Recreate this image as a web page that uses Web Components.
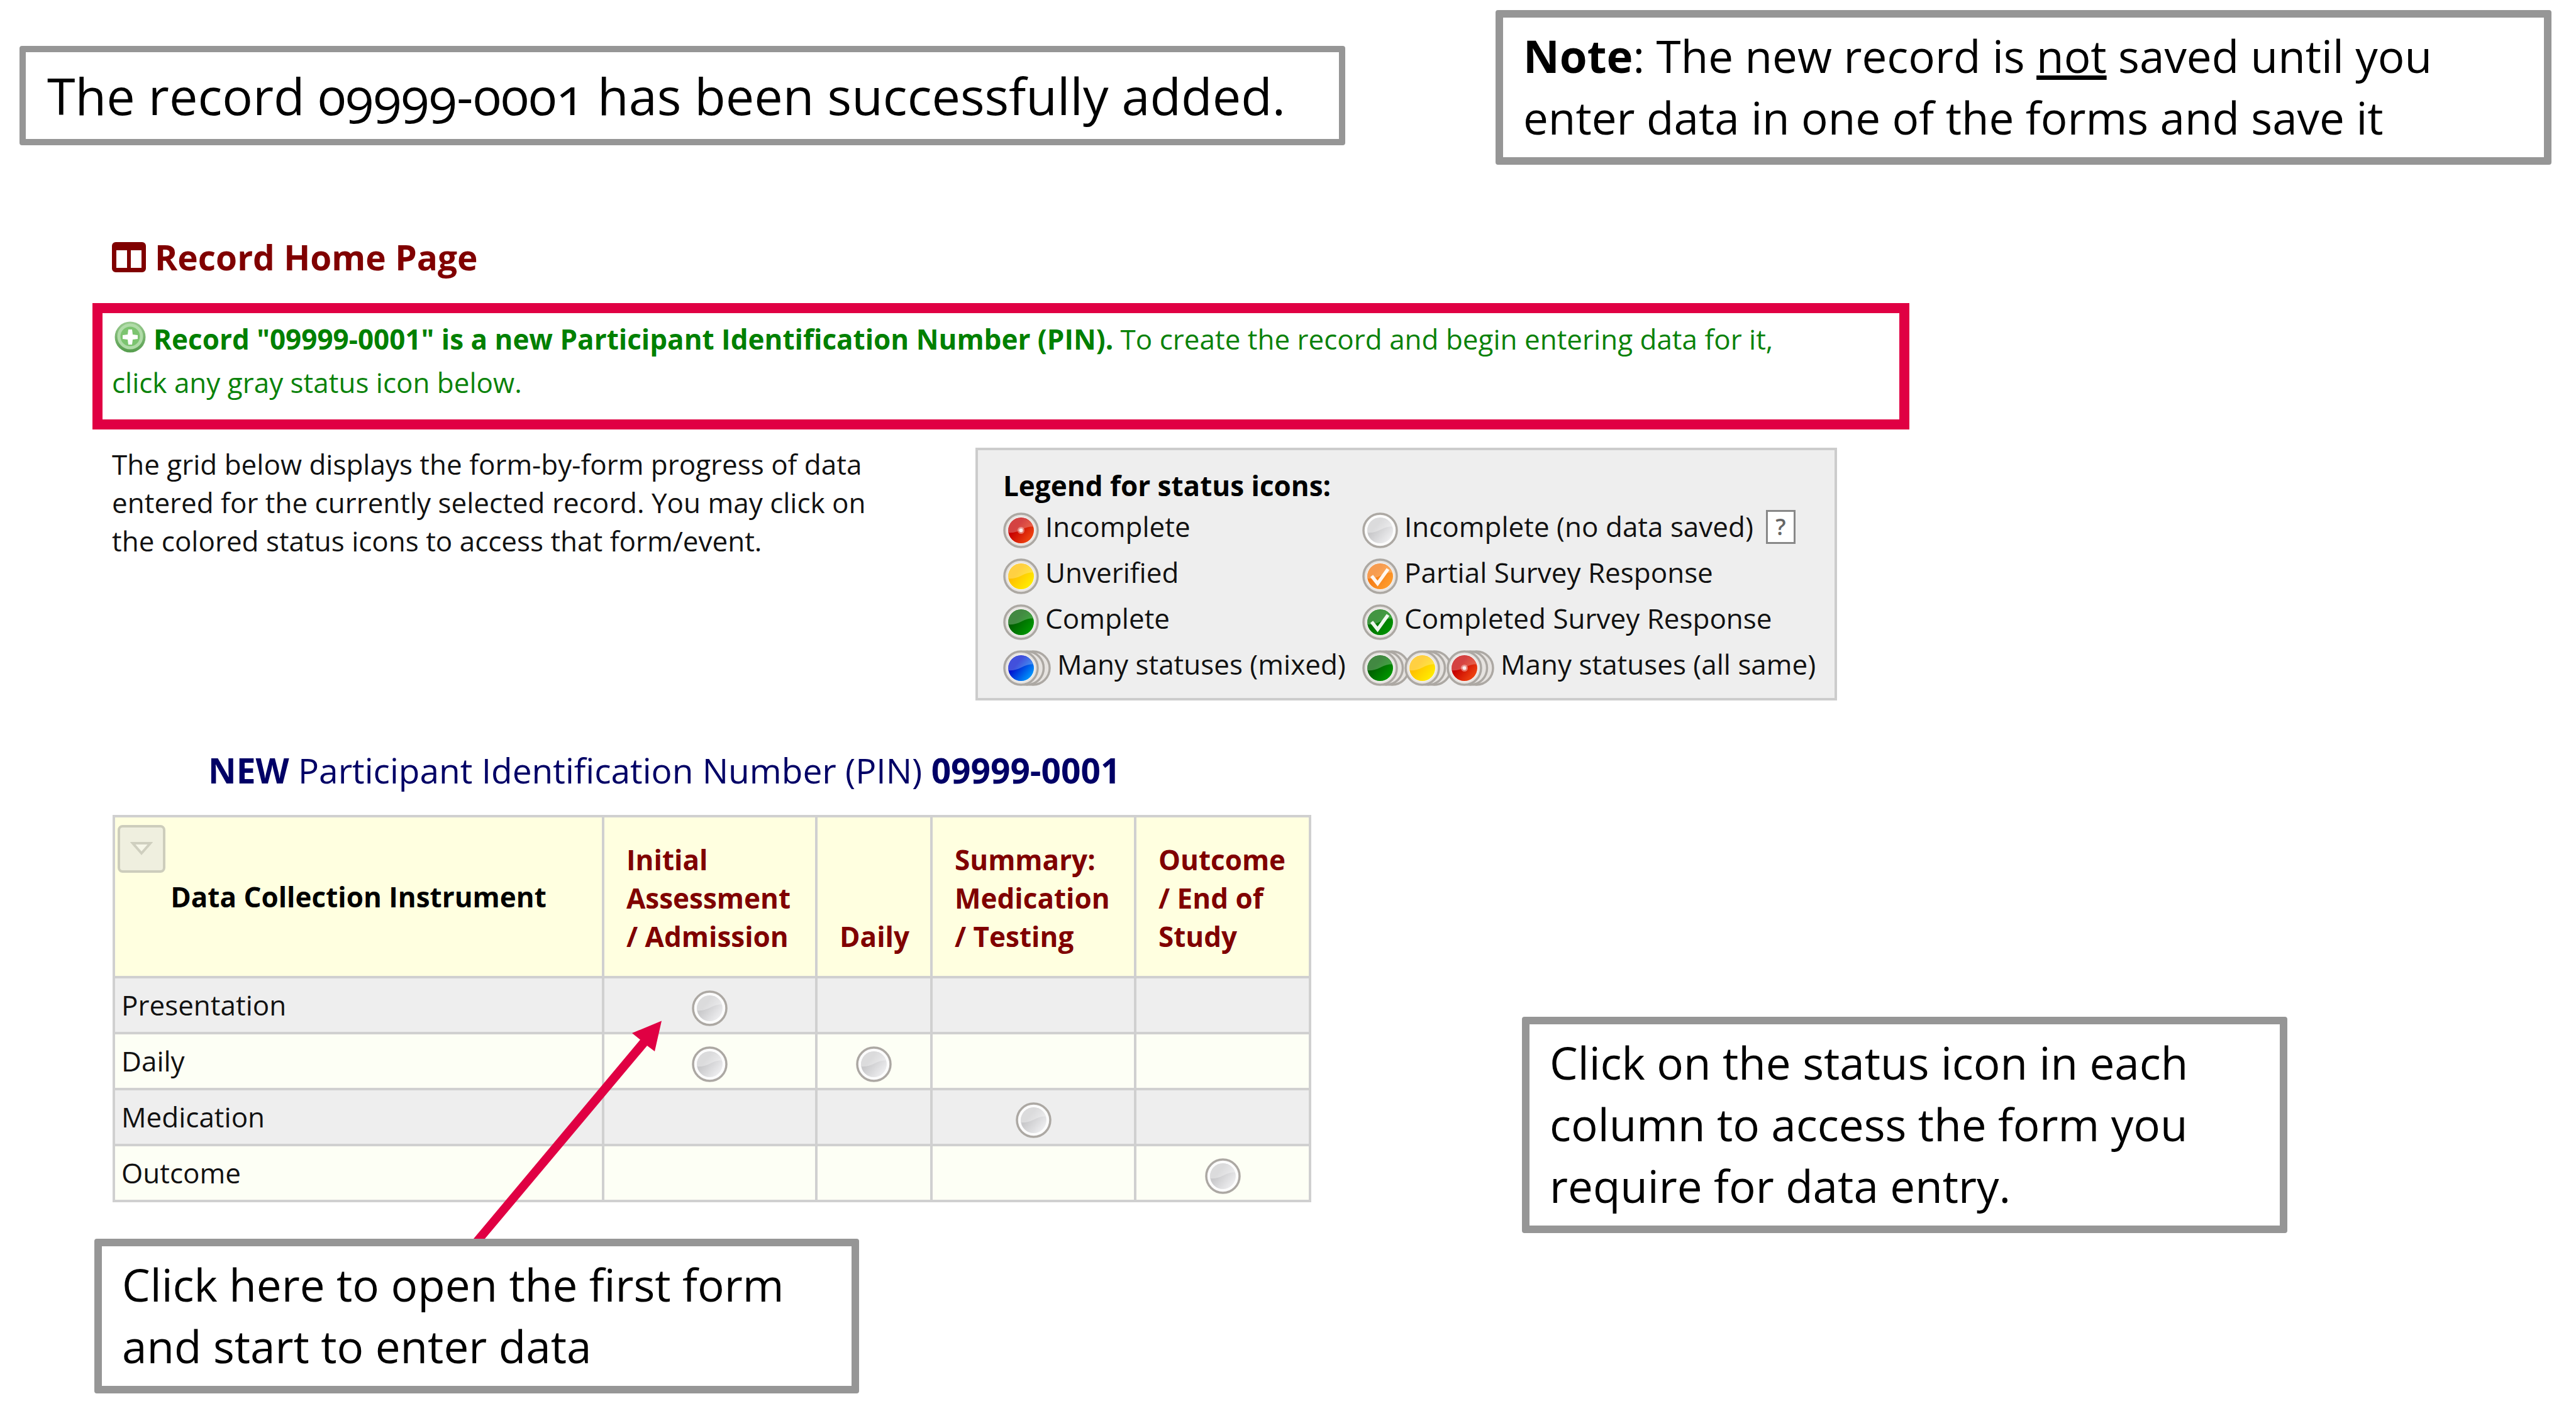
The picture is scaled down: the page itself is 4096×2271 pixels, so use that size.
<!DOCTYPE html>
<html lang="en">
<head>
<meta charset="utf-8">
<title>Record Home Page</title>
<style>
  body { margin: 0; background: #fff; font-family: "Open Sans", "Noto Sans", sans-serif; font-size: 44px; line-height: 61px; color: #111; }
</style>
</head>
<body>
<guide-page>
  <call-out slot="banner" class="large">The record 09999-0001 has been successfully added.</call-out>
  <call-out slot="note"><b>Note</b>: The new record is <u>not</u> saved until you<br>enter data in one of the forms and save it</call-out>
  <page-title slot="main">Record Home Page</page-title>
  <record-alert slot="main"><b>Record "09999-0001" is a new Participant Identification Number (PIN).</b> To create the record and begin entering data for it,<br>click any gray status icon below.</record-alert>
  <intro-row slot="main">
    <span>The grid below displays the form-by-form progress of data entered for the currently selected record. You may click on the colored status icons to access that form/event.</span>
    <status-legend slot="legend"></status-legend>
  </intro-row>
  <record-heading slot="grid"><b>NEW</b> Participant Identification Number (PIN) <b>09999-0001</b></record-heading>
  <event-grid slot="grid"></event-grid>
  <call-out slot="start">Click here to open the first form and start to enter data</call-out>
  <call-out slot="side">Click on the status icon in each column to access the form you require for data entry.</call-out>
</guide-page>

<script>
const define = (name, html) => {
  const t = document.createElement('template');
  t.innerHTML = html;
  customElements.define(name, class extends HTMLElement {
    constructor() {
      super();
      this.attachShadow({ mode: 'open' }).append(t.content.cloneNode(true));
    }
  });
};

// Round status lamp; attributes: kind, and stack for a pile of lamps.
const BALLS = {
  red:    ['#c60000', '#f24a12'],
  yellow: ['#ffc000', '#fff000'],
  green:  ['#006000', '#009a00'],
  blue:   ['#0014d0', '#00a0ff'],
  orange: ['#f57a14', '#ffa030'],
  tick:   ['#007000', '#009400'],
  gray:   ['#c8c8ca', '#f0f0f2']
};
customElements.define('status-dot', class extends HTMLElement {
  constructor() { super(); this.attachShadow({ mode: 'open' }); }
  connectedCallback() {
    const kind = this.getAttribute('kind') || 'gray';
    const stack = this.hasAttribute('stack');
    const [dark, bright] = BALLS[kind];
    const gray = kind === 'gray';
    const w = stack ? 76 : 57;
    const ring = x => `<circle cx="${x}" cy="28.5" r="26.5" fill="${gray ? '#fbfbfb' : '#e6e3e0'}" stroke="#aca8a3" stroke-width="3.5"/>`;
    const check = kind === 'orange' || kind === 'tick'
      ? '<path d="M15 28l9.500 12L41 17" fill="none" stroke="#fff" stroke-width="5.500" opacity=".93"/>' : '';
    const spot = kind === 'red' ? '<circle cx="28.5" cy="28.5" r="5.500" fill="#fff" opacity=".4"/><circle cx="28.5" cy="28.5" r="3" fill="#fff" opacity=".85"/>' : '';
    this.shadowRoot.innerHTML = `
      <style>
        :host { display: inline-block; flex: none; line-height: 0; }
        svg { display: block; }
      </style>
      <svg width="${w}" height="57" viewBox="0 0 ${w} 57" aria-hidden="true">
        <defs><linearGradient id="g" x1=".25" y1=".45" x2=".85" y2=".95">
          <stop offset="0" stop-color="${dark}"/><stop offset="1" stop-color="${bright}"/>
        </linearGradient></defs>
        ${stack ? ring(47.5) + ring(38) : ''}${ring(28.5)}
        <circle cx="28.5" cy="28.5" r="22" fill="#fff" opacity=".5"/>
        <circle cx="28.5" cy="28.5" r="20.5" fill="url(#g)"/>
        <path d="M8 28.5a20.500 20.500 0 0 1 40-6C40 22 34 25 28 28S14 33 8.500 32z" fill="#fff" opacity="${gray ? .35 : .26}"/>
        ${spot}${check}
      </svg>`;
  }
});

define('call-out', `
  <style>
    :host { display: block; box-sizing: border-box; border: 12px solid #969696; border-radius: 4px; background: #fff;
      padding: 12px 32px 14px; font-size: 71px; line-height: 98px; color: #000; }
    :host(.large) { font-size: 81px; border-width: 10px; padding: 20px 34px; font-variant-numeric: oldstyle-nums; }
  </style><slot></slot>`);

define('page-title', `
  <style>
    :host { display: block; padding-left: 31px; }
    h1 { margin: 0; display: flex; align-items: center; gap: 14px; font-size: 55px; line-height: 76px; color: #800000; }
  </style>
  <h1><svg width="54" height="48" viewBox="0 0 54 48" aria-hidden="true">
    <path fill="#800000" fill-rule="evenodd" d="M6 0h42a6 6 0 0 1 6 6v36a6 6 0 0 1-6 6H6a6 6 0 0 1-6-6V6a6 6 0 0 1 6-6zM7 13v28h17V13zM30 13v28h17V13z"/>
  </svg><slot></slot></h1>`);

define('record-alert', `
  <style>
    :host { display: block; box-sizing: border-box; max-width: 2889px; margin-top: 35px; border: 16px solid #e00043;
      padding: 7px 15px 24px 15px; line-height: 69px; color: #0a820a; }
    svg { vertical-align: -6px; margin-right: 10px; }
    ::slotted(b) { color: #008000; }
  </style>
  <svg width="56" height="52" viewBox="0 0 56 52" aria-hidden="true">
    <defs><linearGradient id="p" x1="0" y1="0" x2="0" y2="1"><stop offset="0" stop-color="#9acb90"/><stop offset="1" stop-color="#559d4d"/></linearGradient></defs>
    <circle cx="29" cy="26" r="24.500" fill="url(#p)"/>
    <circle cx="29" cy="25" r="18" fill="#7cc470" stroke="#b0dca8" stroke-width="5"/>
    <path d="M26 14h6l1 8 8 1v6l-8 1-1 8h-6l-1-8-8-1v-6l8-1z" fill="#fff"/>
  </svg><slot></slot>`);

define('intro-row', `
  <style>
    :host { display: flex; align-items: flex-start; gap: 133px; padding: 29px 0 0 31px; }
    p { margin: -4px 0 0; width: 1240px; }
  </style>
  <p><slot></slot></p><slot name="legend"></slot>`);

define('status-legend', `
  <style>
    :host { display: block; box-sizing: border-box; width: 1370px; border: 4px solid #ccc; background: #eee; padding: 28px 0 17px 40px; }
    h2 { margin: 0; font-size: 44px; line-height: 57px; color: #000; }
    ul { margin: 0; padding: 0; list-style: none; display: grid; grid-template-columns: 571px 1fr; }
    li { display: flex; align-items: center; gap: 10px; line-height: 73px; height: 73px; white-space: nowrap; }
    status-dot { padding-top: 11px; }
    status-dot + status-dot { margin-left: -19px; }
    button { width: 47px; height: 54px; margin-left: 10px; padding: 0; border: 3px solid #888; background: #fff;
      font: 600 36px/46px "Open Sans", sans-serif; color: #666; }
  </style>
  <h2>Legend for status icons:</h2>
  <ul>
    <li><status-dot kind="red"></status-dot>Incomplete</li>
    <li><status-dot kind="gray"></status-dot>Incomplete (no data saved)<button type="button">?</button></li>
    <li><status-dot kind="yellow"></status-dot>Unverified</li>
    <li><status-dot kind="orange"></status-dot>Partial Survey Response</li>
    <li><status-dot kind="green"></status-dot>Complete</li>
    <li><status-dot kind="tick"></status-dot>Completed Survey Response</li>
    <li><status-dot kind="blue" stack></status-dot>Many statuses (mixed)</li>
    <li><status-dot kind="green" stack></status-dot><status-dot kind="yellow" stack></status-dot><status-dot kind="red" stack></status-dot>Many statuses (all same)</li>
  </ul>`);

define('record-heading', `
  <style>
    :host { display: block; padding: 74px 0 34px 184px; }
    h2 { margin: 0; font-size: 55px; font-weight: 400; line-height: 74px; color: #000066; white-space: nowrap; }
  </style><h2><slot></slot></h2>`);

const dot = '<a href="#"><status-dot kind="gray"></status-dot></a>';
define('event-grid', `
  <style>
    :host { display: block; padding-left: 32px; }
    table { width: 1906px; table-layout: fixed; border-collapse: collapse; }
    th, td { box-sizing: border-box; border: 4px solid #d0d0d0; }
    thead th { position: relative; height: 256px; background: #ffffe0; color: #800000; text-align: left; vertical-align: bottom; padding: 0 20px 32px 35px; }
    thead th.name { color: #000; text-align: center; vertical-align: middle; padding: 0; }
    tbody th { font-weight: 400; text-align: left; padding: 0 10px; }
    tbody td { padding: 0; text-align: center; }
    tbody tr { height: 89px; background: #fdfff5; }
    tbody tr:nth-child(odd) { background: #eee; }
    a { display: inline-block; vertical-align: middle; line-height: 0; padding-top: 8px; }
    button { position: absolute; left: 4px; top: 12px; width: 76px; height: 76px; padding: 0; border: 4px solid #cdcdbc;
      border-radius: 8px; background: #efefdf; display: grid; place-items: center; }
  </style>
  <table>
    <colgroup><col style="width:778px"><col style="width:339px"><col style="width:183px"><col style="width:324px"><col></colgroup>
    <thead><tr>
      <th class="name" scope="col"><button type="button"><svg width="36" height="22" viewBox="0 0 36 22" aria-hidden="true"><path d="M4 2h28L18 18z" fill="#f6f6e8" stroke="#cfcfbf" stroke-width="4"/></svg></button>Data Collection Instrument</th>
      <th scope="col">Initial Assessment / Admission</th><th scope="col">Daily</th><th scope="col">Summary: Medication / Testing</th><th scope="col">Outcome / End of Study</th>
    </tr></thead>
    <tbody>
      <tr><th scope="row">Presentation</th><td>${dot}</td><td></td><td></td><td></td></tr>
      <tr><th scope="row">Daily</th><td>${dot}</td><td>${dot}</td><td></td><td></td></tr>
      <tr><th scope="row">Medication</th><td></td><td></td><td>${dot}</td><td></td></tr>
      <tr><th scope="row">Outcome</th><td></td><td></td><td></td><td>${dot}</td></tr>
    </tbody>
  </table>`);

define('guide-page', `
  <style>
    :host { display: block; }
    header { display: grid; grid-template-columns: 2108fr 1679fr; column-gap: 239px; align-items: start; padding: 16px 39px 0 31px; }
    ::slotted([slot="banner"]) { margin-top: 57px; }
    main { padding: 109px 0 0 147px; }
    section { display: grid; grid-template-columns: 2273fr 1217fr 459fr; align-items: start; }
    .grid { position: relative; }
    ::slotted([slot="start"]) { margin: 58px 0 0 3px; width: 1216px; }
    ::slotted([slot="side"]) { margin-top: 503px; }
    .arrow { position: absolute; left: 600px; top: 506px; pointer-events: none; }
  </style>
  <header><slot name="banner"></slot><slot name="note"></slot></header>
  <main>
    <slot name="main"></slot>
    <section>
      <div class="grid">
        <slot name="grid"></slot>
        <slot name="start"></slot>
        <svg class="arrow" width="310" height="350" viewBox="0 0 310 350" aria-hidden="true">
          <path d="M305 3.500L258 23l13 10.500L6 350h18L282 43l12 9z" fill="#e00043"/>
        </svg>
      </div>
      <slot name="side"></slot>
    </section>
  </main>`);
</script>
</body>
</html>
